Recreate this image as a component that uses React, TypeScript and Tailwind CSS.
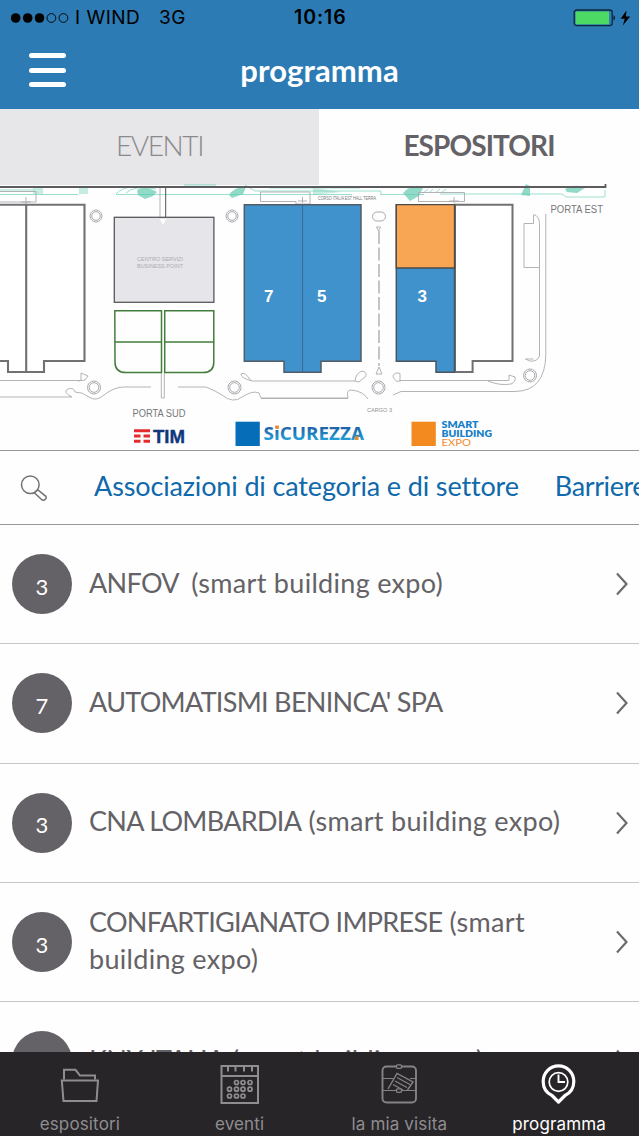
import React from 'react';

interface Exhibitor {
  hall: string;
  name: string;
  fair?: string;
}

const exhibitors: Exhibitor[] = [
  { hall: '3', name: 'ANFOV\u00a0', fair: '(smart building expo)' },
  { hall: '7', name: "AUTOMATISMI BENINCA' SPA" },
  { hall: '3', name: 'CNA LOMBARDIA', fair: '(smart building expo)' },
  { hall: '3', name: 'CONFARTIGIANATO IMPRESE', fair: '(smart building expo)' },
  { hall: '3', name: 'KNX ITALIA', fair: '(smart building expo)' },
];

const StatusBar: React.FC = () => (
  <div className="flex h-[35px] shrink-0 items-center pl-[11px] pr-[8px] font-['Inter'] text-[19px] leading-none text-black">
    <svg width="60" height="12" viewBox="0 0 60 12">
      <circle cx="4.7" cy="6" r="4.8" />
      <circle cx="16.7" cy="6" r="4.8" />
      <circle cx="28.5" cy="6" r="4.8" />
      <circle cx="40.4" cy="6" r="4.4" fill="none" stroke="#000" strokeWidth="0.9" />
      <circle cx="52.4" cy="6" r="4.4" fill="none" stroke="#000" strokeWidth="0.9" />
    </svg>
    <span className="ml-[4px] w-[84px] whitespace-nowrap tracking-[0.5px]">I WIND</span>
    <span className="w-[135px] tracking-[0.5px]">3G</span>
    <span className="flex-1 text-[19.5px] font-semibold tracking-[0.9px]">10:16</span>
    <svg width="58" height="18" viewBox="0 0 58 18">
      <rect x="1.2" y="1" width="38" height="15.6" rx="2.5" fill="none" stroke="#10263a" strokeWidth="1.3" />
      <rect x="2.6" y="2.4" width="33.5" height="12.8" rx="1" fill="#4cd964" />
      <path d="M40.6 6 q2.6 2.8 0 5.8z" />
      <path d="M53.5 1.5 L47.6 9.8 H51.8 L49.8 16.5 L57.2 7.6 H52.8z" />
    </svg>
  </div>
);

const FairMap: React.FC = () => (
  <svg className="block h-[266px] w-full shrink-0 bg-[#fefefe]" viewBox="0 184 639 266">
    {/* greenery along the north road */}
    <path d="M0 184H319V185H0z" fill="#e7e6e8" />
    <g fill="none" stroke="#9be0cf" strokeWidth="1">
      <path d="M0 194.500H78 M116 194.500H240 M240 194.500H352 M380 194.500H424 M440 194H562L566 197H605V190" />
      <path d="M0 190H34 M116 194q6 -7 18 -7 M126 193q8 -8 30 -4 M245 185l10 6h126v3 M270 188h90" />
      <path d="M423 193l5 -4M429 193l4 -4M435 193l5 -4M441 193l5 -4" />
    </g>
    <g fill="#62cbb0" opacity="0.7">
      <path d="M137 190q8 -5 20 2l-4 4 -8 3 -7 -4z" />
      <path d="M229 195q6 -9 17 -8l-3 7 -11 4z" />
      <path d="M403 193q8 -9 20 -5l-4 8 -9 5z" />
      <path d="M521 195l5 -11 4 2v10z" />
      <path d="M565 189q10 -6 20 -1l-8 5 -10 -1z" />
      <path d="M33 187h10v7h-10z M79 187h9v7h-9z M184 184h32v2h-32z" opacity="0.5" />
      <path d="M313 188l28 4 -28 3z" opacity="0.5" />
    </g>
    <path d="M0 187H605.500V183.500" fill="none" stroke="#5c5c5f" strokeWidth="1.8" />

    {/* access paths */}
    <g fill="none" stroke="#aeaab0" strokeWidth="0.9">
      <path d="M0 191.500H36V202H0 M160 188V217 M260.500 192H310V204H296V201.500H260.500z M418.500 192.500H464.500V201.500H418.500z" />
      <path d="M21 202h10M26 197v7 M298 201h9M302.500 197v6 M449 201h10M454 197v6" />
      <path d="M545.800 214V355Q545 391 515 391.500H401L393 395" />
      <path d="M533.500 214.500q5.500 1 6 9V356q-2 6 -10 5l-4 -2h8 M533.500 215V223.500H524V267.500H539" />
      <path d="M0 380.500H81V373l7 3 -3 4 -7 1 M0 397H72q-10 -5 -4 -8q6 -2 7 3q8 0 14 5q7 5 15 -2q10 -8 20 -8H151" />
      <path d="M178 387h28q10 4 16 8q11 9 20 2q11 -7 17 -4l2 5H348q-2 -8 3 -8q12 1 17 9" />
      <path d="M261 398.500H348 M355 381H252q-11 -3 -11 -7q4 -3 10 7 M355 381q1 -9 8 -10q5 2 2 6l-6 5z" />
      <path d="M509 380.500H400q-4 3 -7 -4q1 -5 7 -3v8 M488 381q12 5 23 3q5 -2 4 -7l-6 -2v5" />
      <path d="M379 367l-3 7h6z M376.500 227h4l-2 4z" />
      <path d="M161.300 373V398h3V373" />
    </g>
    <path d="M165.700 188V217" stroke="#515154" />
    <path d="M379 231V366" stroke="#8a8a8d" strokeDasharray="13 3.500" />
    <g fill="none" stroke="#aba7ae" strokeWidth="1">
      <circle cx="96" cy="216" r="6" /><circle cx="96" cy="216" r="4.300" />
      <circle cx="232" cy="216" r="6" /><circle cx="232" cy="216" r="4.300" />
      <circle cx="94" cy="387.500" r="6.500" /><circle cx="94" cy="387.500" r="4.800" />
      <circle cx="234.500" cy="387.500" r="6.500" /><circle cx="234.500" cy="387.500" r="4.800" />
      <circle cx="378.500" cy="387.500" r="6.500" /><circle cx="378.500" cy="387.500" r="4.800" />
      <circle cx="530" cy="375.500" r="6.500" /><circle cx="530" cy="375.500" r="4.800" />
      <rect x="372.500" y="212" width="13" height="9" rx="4.500" />
    </g>

    {/* halls */}
    <path d="M-2 361H8V372H44V361H84.500V204.700H-2 M26.200 204V372" fill="#fff" stroke="#717174" strokeWidth="2.1" />
    <rect x="114.300" y="217.300" width="99.600" height="85" fill="#e6e5e9" stroke="#58585b" strokeWidth="1.300" />
    <path d="M160 219h6l-3 6z" fill="#fff" />
    <g fill="none" stroke="#437d3b" strokeWidth="1.500">
      <path d="M114.800 310.700H161.500V372.600H126Q115 372.600 115 362z M114.800 342H161.500" />
      <path d="M164.700 310.700H213.800V362Q213.800 372.600 203 372.600H164.700z M164.700 342H213.800" />
    </g>
    <path d="M244.300 204.700H361V361.300H321V372.300H284V361.300H244.300z" fill="#4092cc" stroke="#525c66" strokeWidth="1.500" />
    <path d="M302.600 205V372" stroke="#396b90" strokeWidth="1" />
    <path d="M455 204.700H512.500V361H472.600V372H455z" fill="#fff" stroke="#717174" strokeWidth="2" />
    <path d="M396.300 204.700H454.500V372.300H436V361.300H396.300z" fill="#4092cc" stroke="#4d545c" strokeWidth="1.500" />
    <path d="M396.300 204.700H454.500V268H396.300z" fill="#f8a654" stroke="#4d4a48" strokeWidth="1.300" />

    <g className="font-['Liberation_Sans']" fill="#fff" fontSize="17" fontWeight="700">
      <text x="264" y="302.300">7</text>
      <text x="317" y="302.300">5</text>
      <text x="417.500" y="302.300">3</text>
    </g>
    <g className="font-['Liberation_Sans']" fill="#aeabaf" fontSize="6">
      <text x="137" y="261" textLength="46" lengthAdjust="spacingAndGlyphs">CENTRO SERVIZI</text>
      <text x="137" y="267.500" textLength="46" lengthAdjust="spacingAndGlyphs">BUSINESS POINT</text>
      <text x="318" y="200" fill="#777" fontSize="4.500" textLength="58" lengthAdjust="spacingAndGlyphs">CORSO ITALIA EST HALL TERRA</text>
      <text x="367" y="411.500" fill="#929095" fontSize="5.500" textLength="25" lengthAdjust="spacingAndGlyphs">CARGO 3</text>
    </g>
    <g className="font-['Liberation_Sans']" fill="#77777b" fontSize="10">
      <text x="550.500" y="213" textLength="52.500" lengthAdjust="spacingAndGlyphs">PORTA EST</text>
      <text x="132.500" y="417.300" textLength="53" lengthAdjust="spacingAndGlyphs">PORTA SUD</text>
    </g>

    {/* sponsors */}
    <path d="M134 429.300h16v3h-16z M134 434.500h6.500v3h-6.500z M143.500 434.500h6.500v3h-6.500z M134 439.800h6.500v3h-6.500z M143.500 439.800h6.500v3h-6.500z" fill="#e52a2e" />
    <text x="153" y="442.800" className="font-['Liberation_Sans']" fill="#10377c" stroke="#10377c" strokeWidth="0.4" fontSize="19" fontWeight="700" textLength="32" lengthAdjust="spacingAndGlyphs">TIM</text>
    <defs>
      <linearGradient id="sicurezza" x1="0" y1="0" x2="0" y2="1">
        <stop offset="0.3" stopColor="#1b65a8" />
        <stop offset="0.8" stopColor="#23a0d8" />
      </linearGradient>
    </defs>
    <rect x="235.500" y="421.700" width="24.300" height="24.300" fill="#066eb8" />
    <text x="263.500" y="440.200" className="font-['Open_Sans']" fill="url(#sicurezza)" fontSize="18.500" fontWeight="700" textLength="100.500" lengthAdjust="spacingAndGlyphs">SiCUREZZA</text>
    <path d="M275.300 425.500h3.600v3.300h-3.600z M355 436.300h3.600v3.600h-3.600z" fill="#f08a2c" />
    <rect x="411.500" y="421.700" width="24.300" height="24.300" fill="#f28a20" />
    <g className="font-['Lato']" fill="#1680c8" fontSize="10" fontWeight="800">
      <text x="441.500" y="428.200" textLength="37" lengthAdjust="spacingAndGlyphs">SMART</text>
      <text x="441.500" y="437" textLength="50.500" lengthAdjust="spacingAndGlyphs">BUILDING</text>
      <text x="441.500" y="445.800" fill="#f28c30" fontWeight="400" textLength="29.500" lengthAdjust="spacingAndGlyphs">EXPO</text>
    </g>
  </svg>
);

const ExhibitorRow: React.FC<{ exhibitor: Exhibitor }> = ({ exhibitor }) => (
  <div className="flex h-[119.3px] shrink-0 items-center border-b border-[#c6c5c8] pl-3 pr-[11px]">
    <div className="flex size-[60px] shrink-0 items-center justify-center rounded-full bg-[#646266] pt-1 text-[22px] text-white">
      {exhibitor.hall}
    </div>
    <p className="-mt-1 ml-[17px] flex-1 pr-12 text-[27px] leading-[37px] tracking-[-0.7px] text-[#646266]">
      {exhibitor.name}
      {exhibitor.fair && <span className="tracking-[0.3px]"> {exhibitor.fair}</span>}
    </p>
    <svg width="12" height="24" viewBox="0 0 12 24" fill="none" stroke="#6d6b6f" strokeWidth="2.2">
      <path d="M1 1.500L10.500 12L1 22.500" />
    </svg>
  </div>
);

const FolderIcon = () => (
  <svg width="40" height="40" viewBox="0 0 40 40" fill="none" stroke="#8f8d90" strokeWidth="2">
    <path d="M4 15.500V5.800H15.500L20 11.500H35V15.500" />
    <path d="M1.800 16.500H38L36.500 37H3.500z" />
  </svg>
);

const CalendarIcon = () => (
  <svg width="40" height="40" viewBox="0 0 40 40" fill="none" stroke="#8f8d90" strokeWidth="2">
    <path d="M1.500 2H38V39H1.500z M2 12H37.500 M8 2V7.500M15.500 2V7.500M24 2V7.500M32 2V7.500" />
    <g strokeWidth="1.700">
      <circle cx="16.500" cy="18.500" r="2" /><circle cx="23" cy="18.500" r="2" /><circle cx="30" cy="18.500" r="2" />
      <circle cx="9.500" cy="25.200" r="2" /><circle cx="16.500" cy="25.200" r="2" /><circle cx="23" cy="25.200" r="2" /><circle cx="30" cy="25.200" r="2" />
      <circle cx="9.500" cy="32" r="2" /><circle cx="16.500" cy="32" r="2" /><circle cx="23" cy="32" r="2" />
    </g>
  </svg>
);

const VisitIcon = () => (
  <svg width="40" height="40" viewBox="0 0 40 40" fill="none" stroke="#858386" strokeWidth="1.900">
    <rect x="3.500" y="2.500" width="33.500" height="36" rx="4" />
    <path d="M4 14.500H14M31 14.500H37M4 26.500H37" strokeWidth="1.200" />
    <path d="M9 25L18 9.500L34 18L28.500 26" strokeWidth="1.400" />
    <path d="M18 13.500L31 20.500M16 17L28 23.500M14 20.500L24 26" strokeWidth="1.300" />
    <rect x="17.500" y="0.800" width="5" height="3.500" rx="1" fill="#272528" strokeWidth="1.300" />
    <rect x="17.500" y="24.800" width="5" height="3.500" rx="1" fill="#272528" strokeWidth="1.300" />
  </svg>
);

const PinIcon = () => (
  <svg width="40" height="40" viewBox="0 0 40 40" fill="none" stroke="#fff">
    <path d="M19.500 38L13 31.500C6.500 28.500 4.200 23.500 4.200 17.500A15.300 15.700 0 0 1 34.800 17.500C34.800 23.500 32 28.500 26 31.500z" strokeWidth="3.200" strokeLinejoin="round" />
    <circle cx="19.500" cy="18" r="9.300" strokeWidth="1.700" />
    <path d="M19.500 10.500V18H26" strokeWidth="1.900" />
  </svg>
);

const navItems = [
  { label: 'espositori', icon: <FolderIcon />, active: false },
  { label: 'eventi', icon: <CalendarIcon />, active: false },
  { label: 'la mia visita', icon: <VisitIcon />, active: false },
  { label: 'programma', icon: <PinIcon />, active: true },
];

const App: React.FC = () => {
  return (
    <div className="flex h-[1136px] w-[639px] flex-col overflow-hidden bg-[#fefefe] font-['Lato',sans-serif]">
      <header className="h-[109px] shrink-0 bg-[#2c7bb4]">
        <StatusBar />
        <div className="grid h-[70px] grid-cols-[1fr_auto_1fr] items-center">
          <div className="ml-[29px] flex w-[37px] flex-col gap-[9.500px]">
            <span className="h-[5px] rounded-full bg-white" />
            <span className="h-[5px] rounded-full bg-white" />
            <span className="h-[5px] rounded-full bg-white" />
          </div>
          <h1 className="text-[31px] font-bold leading-9 tracking-[0.1px] text-white">programma</h1>
        </div>
      </header>

      <div className="grid h-[75px] shrink-0 grid-cols-[319px_320px] text-[28px]">
        <div className="flex items-center justify-center bg-[#e7e6e8] pb-1 font-light tracking-[-1.4px] text-[#8b898c]">EVENTI</div>
        <div className="flex items-center justify-center pb-1 font-bold tracking-[-0.9px] text-[#646266]">ESPOSITORI</div>
      </div>

      <FairMap />

      <div className="flex h-[75px] shrink-0 items-center overflow-hidden whitespace-nowrap border-y-[1.500px] border-[#99979a] pl-[20px] text-[27px] text-[#0f69ab]">
        <svg className="mr-[47px] shrink-0" width="27" height="26" viewBox="0 0 27 26" fill="none" stroke="#737174" strokeWidth="1.500">
          <circle cx="10.300" cy="9.800" r="8.800" />
          <path d="M14.300 17.700L17.700 14.700L25.800 21.300Q27 24 24.300 25Q23 25.700 21.300 24.300z" />
        </svg>
        <span className="mr-[36px] pb-0.5 tracking-[-0.14px]">Associazioni di categoria e di settore</span>
        <span className="pb-0.5 tracking-[-0.4px]">Barriere</span>
      </div>

      <main className="flex min-h-0 flex-1 flex-col overflow-hidden">
        {exhibitors.map((exhibitor) => (
          <ExhibitorRow key={exhibitor.name} exhibitor={exhibitor} />
        ))}
      </main>

      <nav className="grid h-[84px] shrink-0 grid-cols-4 bg-[#272528] pt-[12px] font-['Inter'] text-[17px] tracking-[0.15px]">
        {navItems.map((item) => (
          <div key={item.label} className={item.active ? 'flex flex-col items-center text-white' : 'flex flex-col items-center text-[#8f8d90]'}>
            {item.icon}
            <span className="mt-[8px]">{item.label}</span>
          </div>
        ))}
      </nav>
    </div>
  );
};

export default App;
